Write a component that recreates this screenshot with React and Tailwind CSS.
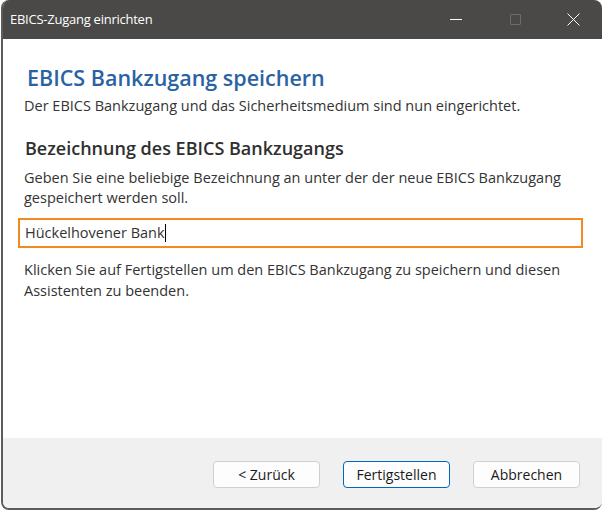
const font = { fontFamily: '"Open Sans", "Noto Sans", sans-serif' };

const WizardButton = ({ label, primary }) => (
  <button
    className={`w-[107px] h-[27px] rounded-[4px] bg-[#fdfdfd] text-[14px] text-[#1a1a1a] border ${
      primary ? "border-[#0067c0]" : "border-[#d0d0d0]"
    }`}
  >
    {label}
  </button>
);

const App = () => {
  return (
    <div className="w-[602px] h-[510px] bg-white overflow-hidden" style={font}>
      <div className="ml-[1px] w-[601px] h-[510px] flex flex-col rounded-t-lg rounded-b-lg overflow-hidden border-l-2 border-b-2 border-[#5c5c5c] bg-white">
        {/* Title bar */}
        <div className="h-[39px] shrink-0 bg-[#4a4947] flex items-center text-white">
          <span className="pl-[7px] text-[13px] tracking-[-0.25px] flex-1">EBICS-Zugang einrichten</span>
          <div className="flex items-center h-full">
            <div className="w-[58px] h-full flex items-center justify-center pr-[3px]">
              <div className="w-[12px] h-[1px] bg-white" />
            </div>
            <div className="w-[58px] h-full flex items-center justify-center">
              <div className="w-[11px] h-[11px] border border-[#6e6d6b] rounded-[1px]" />
            </div>
            <div className="w-[58px] h-full flex items-center justify-center">
              <svg width="13" height="13" viewBox="0 0 13 13" stroke="white" strokeWidth="1">
                <path d="M0.5 0.5 L12.5 12.5 M12.5 0.5 L0.5 12.5" />
              </svg>
            </div>
          </div>
        </div>

        {/* Content */}
        <div className="flex-1 px-[21px] pt-[25px] text-[14.5px] text-[#333333]">
          <h1 className="text-[21.5px] font-semibold text-[#2b63a2] leading-[28px] pl-[3px]">
            EBICS Bankzugang speichern
          </h1>
          <p className="mt-[4px] leading-[20px]">
            Der EBICS Bankzugang und das Sicherheitsmedium sind nun eingerichtet.
          </p>
          <h2 className="mt-[19px] text-[18px] font-semibold text-[#2f2f2f] leading-[26px] pl-[1px]">
            Bezeichnung des EBICS Bankzugangs
          </h2>
          <p className="mt-[7px] leading-[20px] w-[560px]">
            Geben Sie eine beliebige Bezeichnung an unter der der neue EBICS Bankzugang gespeichert werden soll.
          </p>
          <div className="mt-[10px] -ml-[6px] w-[565px] h-[30px] border-2 border-[#f28a22] flex items-center pl-[5px]">
            <span className="leading-[20px]">Hückelhovener Bank</span>
            <span className="w-[1px] h-[18px] bg-black" />
          </div>
          <p className="mt-[11px] leading-[21px] w-[560px]">
            Klicken Sie auf Fertigstellen um den EBICS Bankzugang zu speichern und diesen Assistenten zu beenden.
          </p>
        </div>

        {/* Footer */}
        <div className="h-[70px] shrink-0 bg-[#f0f0f0] flex items-start justify-end gap-[23px] pt-[23px] pr-[22px]">
          <WizardButton label="< Zurück" />
          <WizardButton label="Fertigstellen" primary />
          <WizardButton label="Abbrechen" />
        </div>
      </div>
    </div>
  );
};

export default App;
